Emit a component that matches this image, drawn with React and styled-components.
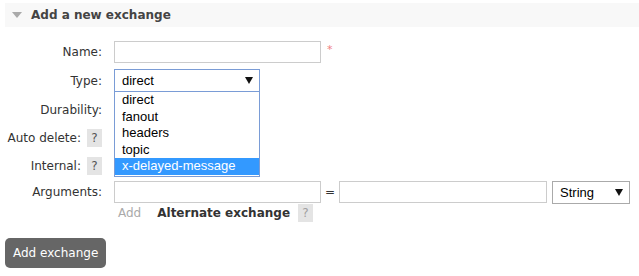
import React from 'react'
import styled, { createGlobalStyle } from 'styled-components'

const GlobalStyle = createGlobalStyle`
    body {
        margin: 0;
        background: #fff;
        font-family: "DejaVu Sans", Verdana, sans-serif;
        font-size: 12px;
        color: #484848;
    }
`

const exchangeTypes = ['direct', 'fanout', 'headers', 'topic', 'x-delayed-message']

const Page = styled.div`
    padding: 3px 0 0 5px;
`

const SectionHeader = styled.div`
    display: flex;
    align-items: center;
    gap: 9px;
    height: 24px;
    padding-left: 7px;
    background: #f8f8f8;
    h2 {
        margin: 0;
        font-size: 12px;
        font-weight: bold;
        color: #444;
    }
`

const Form = styled.div`
    margin-top: 11px;
`

const Row = styled.div`
    display: flex;
    align-items: center;
    height: ${(p) => p.$h}px;
`

const Label = styled.div`
    width: 97px;
    padding-right: 12px;
    display: flex;
    justify-content: flex-end;
    align-items: center;
    gap: 6px;
    color: #333;
`

const Help = styled.span`
    display: inline-flex;
    align-items: center;
    justify-content: center;
    width: 15px;
    height: 18px;
    background: #e4e4e4;
    color: ${(p) => (p.$light ? '#a0a0a0' : '#555')};
    font-size: 12px;
`

const TextInput = styled.div`
    box-sizing: border-box;
    width: ${(p) => p.$w}px;
    height: 22px;
    border: 1px solid #ccc;
    background: #fff;
`

const Required = styled.span`
    margin-left: 6px;
    margin-top: -6px;
    color: #f08080;
    font-size: 11px;
`

const SelectWrap = styled.div`
    position: relative;
    margin-left: ${(p) => p.$ml || 0}px;
`

const SelectBox = styled.div`
    box-sizing: border-box;
    width: ${(p) => p.$w}px;
    height: 23px;
    display: flex;
    align-items: center;
    justify-content: space-between;
    padding: 0 6px 0 7px;
    border: 1px solid ${(p) => (p.$focus ? '#7a9cd6' : '#aaa')};
    background: #fff;
    font-family: "Liberation Sans", Arial, sans-serif;
    font-size: 13px;
    color: #000;
`

const Options = styled.ul`
    position: absolute;
    top: 23px;
    left: 0;
    z-index: 2;
    box-sizing: border-box;
    width: 146px;
    margin: 0;
    padding: 0 0 1px;
    list-style: none;
    border: 1px solid #7a9cd6;
    border-top: none;
    background: #fff;
    font-family: "Liberation Sans", Arial, sans-serif;
    font-size: 13px;
    color: #000;
`

const Option = styled.li`
    height: 16.6px;
    line-height: 16.6px;
    padding-left: 7px;
    background: ${(p) => (p.$active ? '#3399ff' : 'transparent')};
    color: ${(p) => (p.$active ? '#fff' : '#000')};
`

const Equals = styled.span`
    margin: 0 4px;
    color: #333;
`

const AddLink = styled.span`
    margin-left: 4px;
    color: #aaa;
`

const AltLabel = styled.span`
    margin-left: 16px;
    margin-right: 8px;
    font-weight: bold;
    color: #333;
`

const Button = styled.button`
    margin-top: 16px;
    height: 30px;
    padding: 0 8px;
    border: none;
    border-radius: 5px;
    background: #666;
    color: #fff;
    font-family: "DejaVu Sans", Verdana, sans-serif;
    font-size: 12px;
`

const Arrow = () => (
    <svg width="8" height="7" viewBox="0 0 8 7">
        <path d="M0 0 L8 0 L4 7 Z" fill="#111" />
    </svg>
)

const Triangle = () => (
    <svg width="10" height="6" viewBox="0 0 10 6">
        <path d="M0 0 L10 0 L5 6 Z" fill="#aaa" />
    </svg>
)

const App = () => {
    return (
        <Page>
            <GlobalStyle />
            <SectionHeader>
                <Triangle />
                <h2>Add a new exchange</h2>
            </SectionHeader>
            <Form>
                <Row $h={28}>
                    <Label>Name:</Label>
                    <TextInput $w={207} />
                    <Required>*</Required>
                </Row>
                <Row $h={29}>
                    <Label>Type:</Label>
                    <SelectWrap>
                        <SelectBox $w={146} $focus>
                            direct
                            <Arrow />
                        </SelectBox>
                        <Options>
                            {exchangeTypes.map((t) => (
                                <Option key={t} $active={t === 'x-delayed-message'}>{t}</Option>
                            ))}
                        </Options>
                    </SelectWrap>
                </Row>
                <Row $h={29}>
                    <Label>Durability:</Label>
                </Row>
                <Row $h={28}>
                    <Label>Auto delete: <Help>?</Help></Label>
                </Row>
                <Row $h={28}>
                    <Label>Internal: <Help>?</Help></Label>
                </Row>
                <Row $h={24}>
                    <Label>Arguments:</Label>
                    <TextInput $w={207} />
                    <Equals>=</Equals>
                    <TextInput $w={208} />
                    <SelectWrap $ml={5}>
                        <SelectBox $w={78}>
                            String
                            <Arrow />
                        </SelectBox>
                    </SelectWrap>
                </Row>
                <Row $h={18}>
                    <Label />
                    <AddLink>Add</AddLink>
                    <AltLabel>Alternate exchange</AltLabel>
                    <Help $light>?</Help>
                </Row>
            </Form>
            <Button>Add exchange</Button>
        </Page>
    )
}

export default App
